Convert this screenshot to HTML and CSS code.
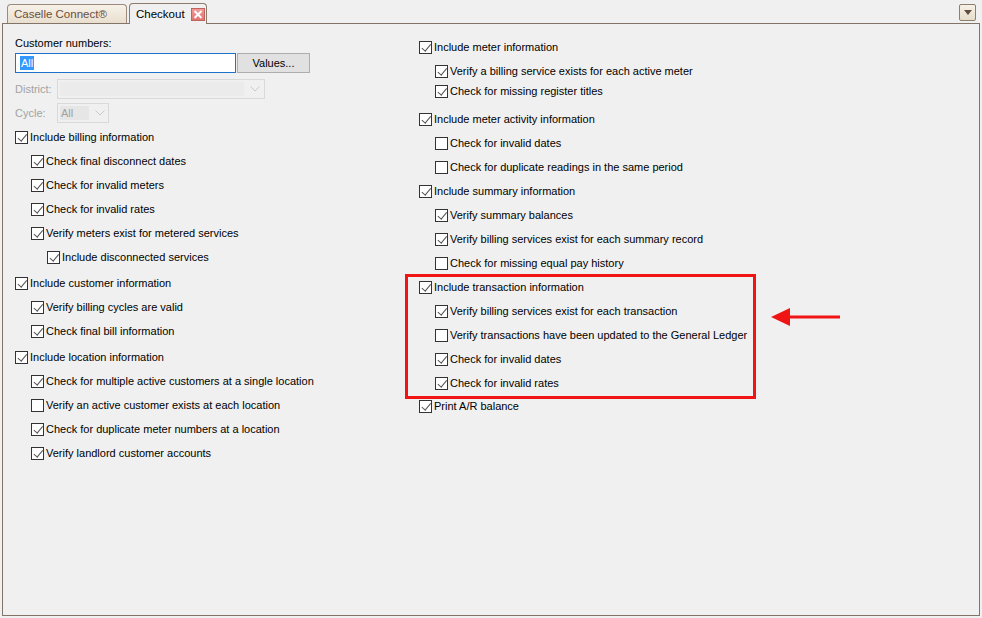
FILE: index.html
```html
<!DOCTYPE html>
<html>
<head>
<meta charset="utf-8">
<link rel="stylesheet" href="styles.css">
</head>
<body>
<div class="app">
  <div class="tabbar">
    <div class="tab inactive">Caselle Connect®</div>
    <div class="tab active">Checkout
      <span class="close"><svg width="10" height="9" viewBox="0 0 10 9"><path d="M1.5 1 L8.5 8 M8.5 1 L1.5 8" stroke="#fff" stroke-width="2"/></svg></span>
    </div>
    <div class="spacer"></div>
    <div class="menu-btn"><svg width="8" height="5" viewBox="0 0 8 5"><path d="M0 0 H8 L4 5 Z" fill="#5e4c3e"/></svg></div>
  </div>
  <div class="panel">
    <div class="col left">
      <div class="lbl">Customer numbers:</div>
      <div class="inrow">
        <div class="input"><span class="sel">All</span></div>
        <div class="btn">Values...</div>
      </div>
      <div class="frow first">
        <span class="flabel">District:</span>
        <div class="select district"><span class="sfill"></span><svg class="chev" width="10" height="6" viewBox="0 0 10 6"><path d="M0.5 0.5 L5 5 L9.5 0.5" fill="none" stroke="#c8c8c8"/></svg></div>
      </div>
      <div class="frow">
        <span class="flabel">Cycle:</span>
        <div class="select cycle"><span class="sfill">All</span><svg class="chev" width="10" height="6" viewBox="0 0 10 6"><path d="M0.5 0.5 L5 5 L9.5 0.5" fill="none" stroke="#c8c8c8"/></svg></div>
      </div>

      <div class="cb first"><span class="box on"></span>Include billing information</div>
      <div class="cb l2"><span class="box on"></span>Check final disconnect dates</div>
      <div class="cb l2"><span class="box on"></span>Check for invalid meters</div>
      <div class="cb l2"><span class="box on"></span>Check for invalid rates</div>
      <div class="cb l2"><span class="box on"></span>Verify meters exist for metered services</div>
      <div class="cb l3"><span class="box on"></span>Include disconnected services</div>

      <div class="cb grp"><span class="box on"></span>Include customer information</div>
      <div class="cb l2"><span class="box on"></span>Verify billing cycles are valid</div>
      <div class="cb l2"><span class="box on"></span>Check final bill information</div>

      <div class="cb grp"><span class="box on"></span>Include location information</div>
      <div class="cb l2"><span class="box on"></span>Check for multiple active customers at a single location</div>
      <div class="cb l2"><span class="box"></span>Verify an active customer exists at each location</div>
      <div class="cb l2"><span class="box on"></span>Check for duplicate meter numbers at a location</div>
      <div class="cb l2"><span class="box on"></span>Verify landlord customer accounts</div>
    </div>

    <div class="col right">
      <div class="cb top"><span class="box on"></span>Include meter information</div>
      <div class="cb l2"><span class="box on"></span>Verify a billing service exists for each active meter</div>
      <div class="cb l2 tight"><span class="box on"></span>Check for missing register titles</div>

      <div class="cb wide"><span class="box on"></span>Include meter activity information</div>
      <div class="cb l2"><span class="box"></span>Check for invalid dates</div>
      <div class="cb l2"><span class="box"></span>Check for duplicate readings in the same period</div>

      <div class="cb"><span class="box on"></span>Include summary information</div>
      <div class="cb l2"><span class="box on"></span>Verify summary balances</div>
      <div class="cb l2"><span class="box on"></span>Verify billing services exist for each summary record</div>
      <div class="cb l2"><span class="box"></span>Check for missing equal pay history</div>

      <div class="txgroup">
        <div class="cb tight"><span class="box on"></span>Include transaction information</div>
        <div class="cb l2"><span class="box on"></span>Verify billing services exist for each transaction</div>
        <div class="cb l2"><span class="box"></span>Verify transactions have been updated to the General Ledger</div>
        <div class="cb l2"><span class="box on"></span>Check for invalid dates</div>
        <div class="cb l2"><span class="box on"></span>Check for invalid rates</div>
        <div class="redbox"></div>
        <svg class="arrow" width="70" height="18" viewBox="0 0 70 18"><path d="M0 9 L19 0 L19 18 Z" fill="#f01414"/><rect x="18" y="7.5" width="51" height="3" fill="#f01414"/></svg>
      </div>

      <div class="cb last"><span class="box on"></span>Print A/R balance</div>
    </div>
  </div>
</div>
</body>
</html>
```
FILE: styles.css
```css
html, body {
  margin: 0;
  padding: 0;
  background: #f0f0f0;
}
body {
  font-family: "Liberation Sans", Arial, sans-serif;
  font-size: 11px;
  color: #000;
}
.app {
  width: 982px;
  height: 618px;
  overflow: hidden;
}
.tabbar {
  height: 20px;
  padding-top: 3px;
  padding-left: 7px;
  padding-right: 6px;
  display: flex;
  align-items: flex-end;
  position: relative;
  z-index: 2;
}
.tab {
  box-sizing: border-box;
  border: 1px solid #9c8b7c;
  border-bottom: none;
  border-radius: 4px 4px 0 0;
  display: flex;
  align-items: center;
}
.tab.inactive {
  width: 120px;
  height: 19px;
  padding-left: 6px;
  color: #6a4e3e;
  background: linear-gradient(#f7f1e8, #e9dfcf);
  margin-right: 2px;
  font-size: 11.5px;
}
.tab.active {
  width: 78px;
  height: 21px;
  margin-bottom: -1px;
  padding-left: 6px;
  background: #f0f0f0;
  border-color: #8a7b6e;
  font-size: 11.5px;
}
.close {
  margin-left: 6px;
  width: 12px;
  height: 11px;
  border: 1px solid #c0625e;
  background: linear-gradient(#f29a96, #e07470);
  display: flex;
  align-items: center;
  justify-content: center;
}
.spacer { flex: 1; }
.menu-btn {
  align-self: flex-start;
  margin-top: 1px;
  box-sizing: border-box;
  width: 17px;
  height: 17px;
  border: 1px solid #8f7e6e;
  border-radius: 2px;
  background: linear-gradient(#f7f1e6, #e6dccb);
  display: flex;
  align-items: center;
  justify-content: center;
}
.panel {
  box-sizing: border-box;
  margin-left: 2px;
  width: 978px;
  height: 593px;
  border: 1px solid #827468;
  padding-left: 12px;
  display: flex;
  align-items: flex-start;
  position: relative;
  z-index: 1;
}
.col.left { width: 404px; }
.col.right { flex: 1; }
.lbl {
  margin-top: 12px;
  height: 14px;
  line-height: 14px;
}
.inrow {
  margin-top: 3px;
  display: flex;
  height: 20px;
}
.input {
  box-sizing: border-box;
  width: 221px;
  height: 20px;
  border: 1px solid #1d72cc;
  background: #fff;
  padding-left: 4px;
  display: flex;
  align-items: center;
}
.sel {
  background: #3399ff;
  color: #fff;
  line-height: 14px;
  padding: 0 1px;
}
.btn {
  box-sizing: border-box;
  margin-left: 1px;
  width: 73px;
  height: 20px;
  border: 1px solid #adadad;
  background: #e1e1e1;
  display: flex;
  align-items: center;
  justify-content: center;
}
.frow {
  margin-top: 4px;
  height: 20px;
  display: flex;
  align-items: center;
}
.frow.first { margin-top: 6px; }
.flabel {
  width: 42px;
  color: #a2a2a2;
}
.select {
  box-sizing: border-box;
  height: 20px;
  border: 1px solid #d9d9d9;
  background: #f0f0f0;
  display: flex;
  align-items: center;
  padding: 2px;
}
.select.district { width: 208px; }
.select.cycle { width: 52px; }
.sfill {
  align-self: stretch;
  display: flex;
  align-items: center;
  color: #a2a2a2;
  padding-left: 1px;
}
.district .sfill { width: 183px; background: #ebebeb; }
.cycle .sfill { width: 28px; background: #e6e6e6; }
.chev { margin-left: 6px; }

.cb {
  margin-top: 4px;
  height: 20px;
  display: flex;
  align-items: center;
  white-space: nowrap;
}
.cb.first { margin-top: 4px; }
.cb.grp { margin-top: 6px; }
.cb.top { margin-top: 13px; }
.cb.tight { margin-top: 0; }
.cb.wide { margin-top: 8px; }
.cb.last { margin-top: 3px; }
.cb.l2 { padding-left: 16px; }
.cb.l3 { padding-left: 32px; }
.box {
  box-sizing: border-box;
  width: 13px;
  height: 13px;
  border: 1px solid #333;
  background: #fff;
  margin-right: 2px;
  flex: none;
  position: relative;
}
.box.on::after {
  content: "";
  position: absolute;
  left: 3.5px;
  top: 0px;
  width: 3.5px;
  height: 7.5px;
  border-right: 1.5px solid #555;
  border-bottom: 1.5px solid #555;
  transform: rotate(40deg);
}
.txgroup {
  position: relative;
  margin-top: 4px;
}
.redbox {
  position: absolute;
  left: -14px;
  top: -3px;
  width: 351px;
  height: 125px;
  box-sizing: border-box;
  border: 3px solid #f01414;
}
.arrow {
  position: absolute;
  left: 352px;
  top: 31px;
}
```
